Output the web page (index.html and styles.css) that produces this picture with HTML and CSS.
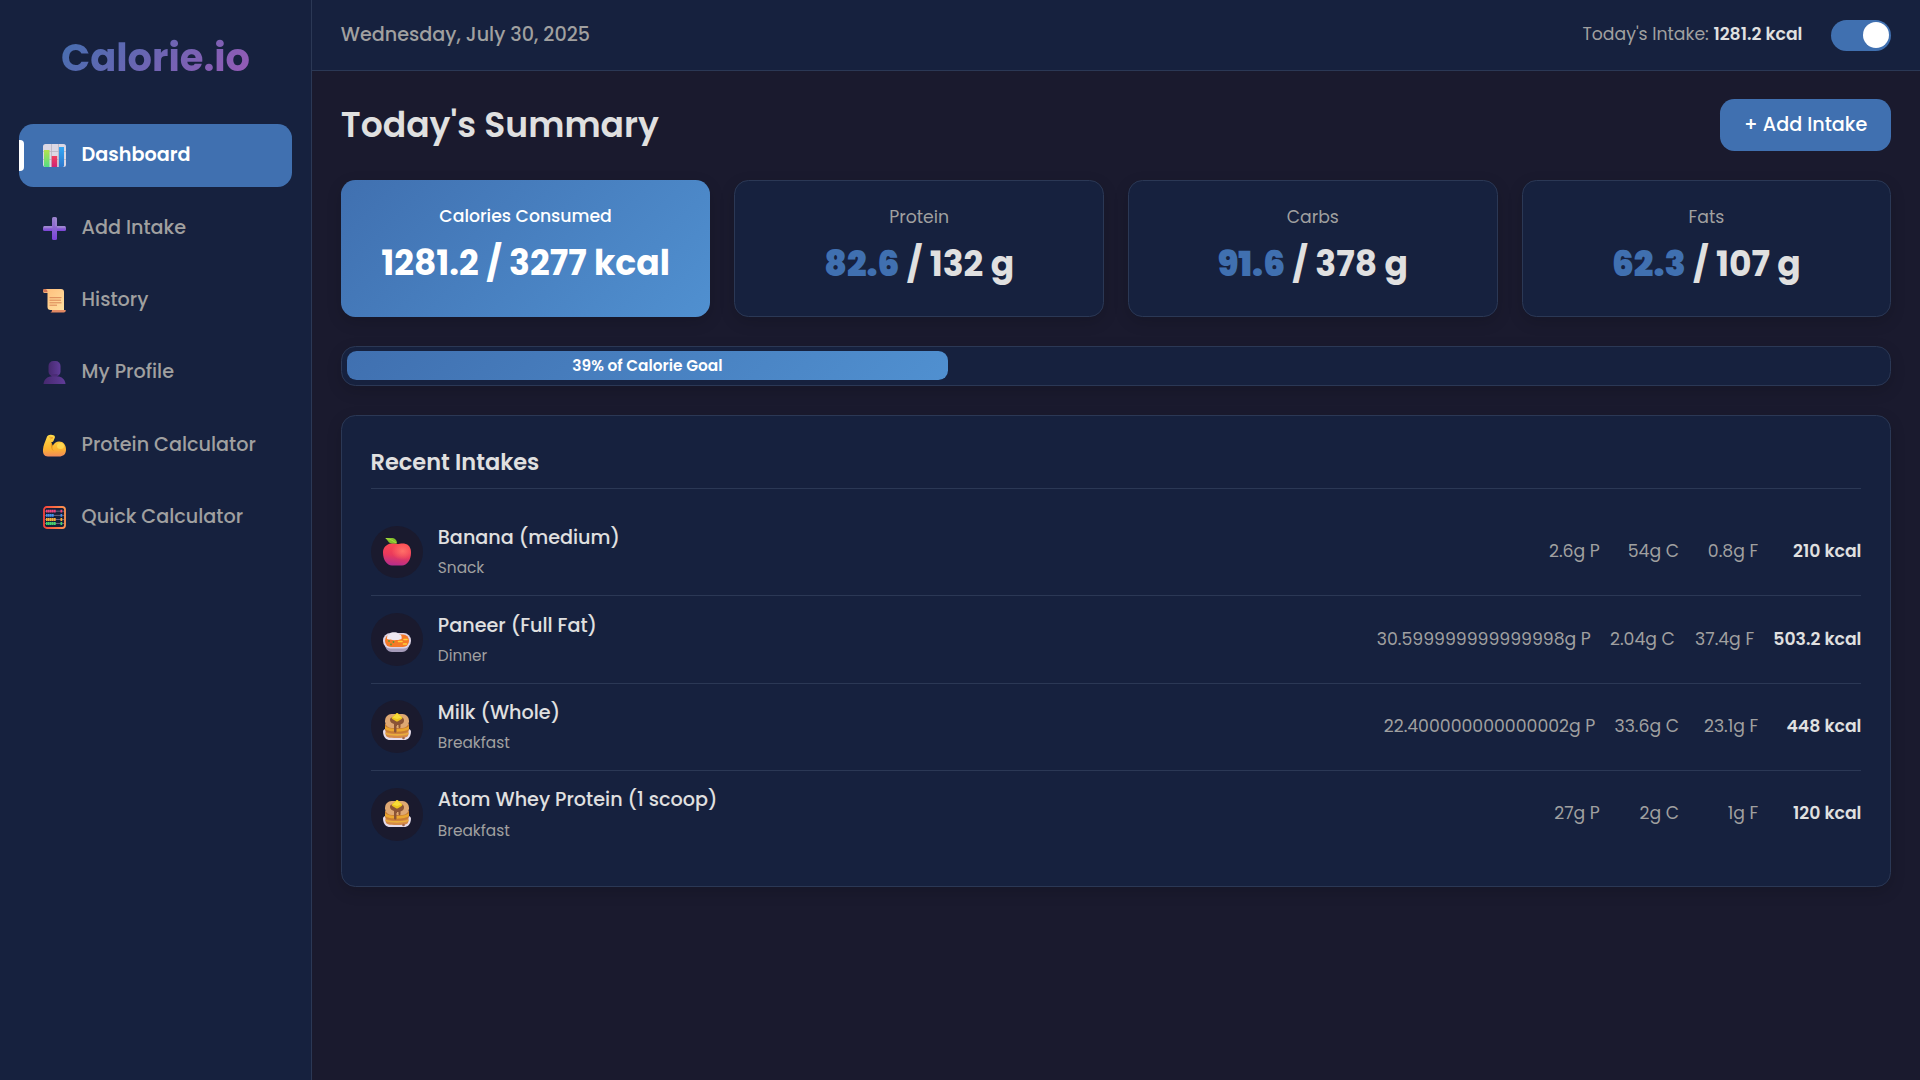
FILE: index.html
```html
<!DOCTYPE html>
<html lang="en">
<head>
<meta charset="utf-8">
<title>Calorie.io</title>
<link rel="stylesheet" href="styles.css">
</head>
<body>
<svg class="defs" aria-hidden="true">
  <defs>
    <linearGradient id="apple" x1="0.6" y1="0" x2="0.4" y2="1"><stop offset="0" stop-color="#ff4a50"/><stop offset="0.55" stop-color="#e93a5c"/><stop offset="1" stop-color="#b52d8c"/></linearGradient>
    <radialGradient id="shine" cx="0.7" cy="0.35" r="0.4"><stop offset="0" stop-color="#ff7068"/><stop offset="1" stop-color="#ff7068" stop-opacity="0"/></radialGradient>
    <linearGradient id="gold" x1="0" y1="0" x2="0" y2="1"><stop offset="0" stop-color="#ffdc4a"/><stop offset="0.65" stop-color="#fdb42f"/><stop offset="1" stop-color="#f08a5a"/></linearGradient>
    <linearGradient id="plus" x1="0" y1="0" x2="0" y2="1"><stop offset="0" stop-color="#9a83cc"/><stop offset="1" stop-color="#7b42d8"/></linearGradient>
    <linearGradient id="paper" x1="0" y1="0" x2="1" y2="1"><stop offset="0" stop-color="#ffbd7a"/><stop offset="1" stop-color="#ffe0a0"/></linearGradient>
    <linearGradient id="person" x1="0" y1="0" x2="1" y2="0"><stop offset="0" stop-color="#46296f"/><stop offset="1" stop-color="#603c98"/></linearGradient>
    <linearGradient id="frame" x1="0" y1="0" x2="1" y2="0"><stop offset="0" stop-color="#f5433a"/><stop offset="1" stop-color="#ff9550"/></linearGradient>
    <linearGradient id="green" x1="0" y1="0" x2="0" y2="1"><stop offset="0" stop-color="#b4e34c"/><stop offset="1" stop-color="#55dd84"/></linearGradient>
    <linearGradient id="blue" x1="0" y1="0" x2="0" y2="1"><stop offset="0" stop-color="#35a8f5"/><stop offset="1" stop-color="#2f78cc"/></linearGradient>
    <linearGradient id="red" x1="0" y1="0" x2="0" y2="1"><stop offset="0" stop-color="#f23f5c"/><stop offset="1" stop-color="#cf2377"/></linearGradient>
    <symbol id="pancakes" viewBox="0 0 28 28">
      <path d="M0 18.5C0 16 3 15 14 15s14 1 14 3.500c0 6-3.500 8.500-7 8.500H7c-3.500 0-7-2.500-7-8.500z" fill="#e6dce9"/>
      <path d="M2.500 15h23v5.500c0 4-3 4.500-11.500 4.500S2.500 24.500 2.500 20.500z" fill="#d58a48"/>
      <path d="M2.500 19.500c4 2 19 2 23 0v1.500c-4 2.300-19 2.300-23 0z" fill="#eaae3c"/>
      <path d="M2 11h24v5c0 3-4 4.500-12 4.500S2 19 2 16z" fill="#c77c32"/>
      <path d="M2 13c3 4 21 4 24 0v3c-4 3.500-20 3.500-24 0z" fill="#eaa62f"/>
      <rect x="2" y="1" width="24" height="14" rx="6.500" fill="#dea873"/>
      <path d="M7 7c0-3 3-3 7-3s7 0 7 3.500c0 2-1 3-3.500 4V14c0 1.500-2 1.500-2 0v-2H14v1h-.5v5.500c0 1.500-2.500 1.500-2.500 0V11C8.500 10 7 9 7 7z" fill="#8b5436"/>
      <path d="M9 4.300 13 .5c.7-.6 1.500-.6 2.200 0L19 4.300c.5.500.4 1.200-.3 1.600l-3.700 2.300c-.6.400-1.400.400-2 0L9.300 6c-.7-.4-.8-1.100-.3-1.700z" fill="#edc51c"/>
      <path d="m9.500 4.500 4.600-3.900 4.500 3.900-4.500 1.600z" fill="#f8dc3a"/>
      <circle cx="20.500" cy="25" r="1.300" fill="#a36649"/>
    </symbol>
  </defs>
</svg>
<div class="app">
  <aside class="sidebar">
    <div class="logo">Calorie.io</div>
    <nav class="nav">
      <a class="nav-item active">
        <svg class="nav-icon" viewBox="0 0 23 23"><rect width="23" height="23" rx="2.500" fill="#dcd8e4"/><path d="M8.500 0v23M15.500 0v23M0 7.500h23M0 15.500h23" stroke="#b9b4c2" stroke-width=".8"/><path d="M1 6h5.500v17H2.500A1.500 1.500 0 0 1 1 21.500z" fill="url(#green)"/><path d="M8.700 12h5.500v11H8.700z" fill="url(#red)"/><path d="M16 3h5v18.500a1.500 1.500 0 0 1-1.500 1.500H16z" fill="url(#blue)"/></svg>
        <span>Dashboard</span></a>
      <a class="nav-item">
        <svg class="nav-icon" viewBox="0 0 23 23"><rect y="9" width="23" height="5" rx="1.500" fill="url(#plus)"/><rect x="9" width="5" height="23" rx="1.500" fill="url(#plus)"/><path d="M13 1v8.500M1 10h8.500M14 10h8" stroke="#a590d2" stroke-width="1"/></svg>
        <span>Add Intake</span></a>
      <a class="nav-item">
        <svg class="nav-icon" viewBox="0 0 23 23"><path d="M1.500 0H18c2 0 3 1 3 3v18H7.500c-2 0-3-1-3-3V4H1.500C-.5 4-.5 0 1.500 0z" fill="url(#paper)"/><path d="M1.500 0C4 0 4.500 1.500 4.500 3.200H1.500C-.4 3.200-.4 0 1.500 0z" fill="#cf7457"/><path d="M6.500 8.700h12M6.500 11.200h11.500M6.500 13.800h12M6.500 16.200h7.500" stroke="#d98656" stroke-width="1"/><path d="M9 21h13.700c.3 1.300-.5 2.500-2 2.500H7c1.500 0 2-1 2-2.500z" fill="#e38a63"/></svg>
        <span>History</span></a>
      <a class="nav-item">
        <svg class="nav-icon" viewBox="0 0 23 23"><rect x="5.500" width="12" height="15.500" rx="5" fill="url(#person)"/><path d="M8.500 13h6v4h-6z" fill="#4b2c76"/><path d="M.5 23c.5-5 4-7.500 8-7.500h6c4 0 7.500 2.500 8 7.500z" fill="url(#person)"/></svg>
        <span>My Profile</span></a>
      <a class="nav-item">
        <svg class="nav-icon" viewBox="0 0 23 23"><path d="M3.500 4C4 1.500 6 .5 8 .7l2.500.5c1.700.4 1.700 2.200 1 3.300L10.500 7c-.4 1-1.500 1-2.300 1l1.500 4c1-2.500 3.500-4.500 6.500-4.500 4 0 6.800 3.500 6.800 8 0 5-3 7-7 7H5c-4 0-5.300-3-5-7C.3 11.500 2 8 3.500 4z" fill="url(#gold)"/><path d="M8.200 8 9.700 12c-.7 2 0 4 1.300 5-2.500-1-3.800-4-2.800-9z" fill="#e8961f"/><ellipse cx="17.500" cy="12" rx="3.500" ry="3" fill="#ffe15b" opacity=".7"/><path d="m6 3 4 .7-3 1.500" fill="none" stroke="#f2a72e"/></svg>
        <span>Protein Calculator</span></a>
      <a class="nav-item">
        <svg class="nav-icon" viewBox="0 0 23 23"><rect x="1" y="1" width="21" height="21" rx="2.700" fill="#14203a" stroke="url(#frame)" stroke-width="1.800"/><path d="M2 5.200h19M2 9.400h19M2 13.500h19M2 17.500h19" stroke="#8b7e9a" stroke-width=".7"/><g stroke-width="2.800" stroke-dasharray="1.700 .3"><path d="M3 5.200h10M17.500 5.200h2" stroke="#f0447d"/><path d="M3 9.400h8M17.500 9.400h2" stroke="#4292ed"/><path d="M3 13.500h10M17.500 13.500h2" stroke="#f9ae38"/><path d="M3 17.500h10M17.500 17.500h2" stroke="#43d36b"/></g></svg>
        <span>Quick Calculator</span></a>
    </nav>
  </aside>
  <div class="page">
    <header class="topbar">
      <div class="date">Wednesday, July 30, 2025</div>
      <div class="topbar-right">
        <div class="today">Today's Intake: <strong>1281.2 kcal</strong></div>
        <div class="switch"><div class="knob"></div></div>
      </div>
    </header>
    <main class="main">
      <div class="title-row"><h1>Today's Summary</h1><button class="add">+ Add Intake</button></div>
      <section class="stats">
        <div class="stat primary"><div class="label">Calories Consumed</div><div class="value">1281.2 / 3277 kcal</div></div>
        <div class="stat"><div class="label">Protein</div><div class="value"><b>82.6</b> / 132 g</div></div>
        <div class="stat"><div class="label">Carbs</div><div class="value"><b>91.6</b> / 378 g</div></div>
        <div class="stat"><div class="label">Fats</div><div class="value"><b>62.3</b> / 107 g</div></div>
      </section>
      <div class="progress"><div class="fill" style="width:39.1%">39% of Calorie Goal</div></div>
      <section class="recent">
        <h2>Recent Intakes</h2>
        <ul class="list">
          <li class="row">
            <div class="avatar"><svg class="food" viewBox="0 0 28 28"><path d="M8.500 5.500C11.500 5 13 5.500 14 6S18 5 21 5.500c5 .8 7 4.500 7 9 0 7.500-4 13-9 13h-10C4 27.500 0 22 0 14.500c0-4.500 3-8.500 8.500-9z" fill="url(#apple)"/><path d="M8.500 5.500C11.500 5 13 5.500 14 6S18 5 21 5.500c5 .8 7 4.500 7 9 0 7.500-4 13-9 13h-10C4 27.500 0 22 0 14.500c0-4.500 3-8.500 8.500-9z" fill="url(#shine)"/><path d="M2 0h6c4 0 6 2 6 5.500H9C5 5.500 5 1.500 2 0z" fill="#83bf2c"/><path d="M3 .5C8 1 10 3 13 5" stroke="#a6dc42" fill="none"/></svg></div>
            <div class="info"><div class="name">Banana (medium)</div><div class="meal">Snack</div></div>
            <div class="nums"><span class="m">2.6g P</span><span class="m">54g C</span><span class="m">0.8g F</span><strong>210 kcal</strong></div>
          </li>
          <li class="row">
            <div class="avatar"><svg class="food" viewBox="0 0 28 28"><path d="M1 16c1 7 3 11 8 11h10c5 0 7-4 8-11z" fill="#a59bb9"/><rect y="8" width="28" height="15.500" rx="7.500" fill="#ddd3e4"/><rect x="2" y="9.500" width="24" height="12.500" rx="6" fill="#f57a28"/><path d="M4 13c0-2.500 1-3.500 2.500-3.600C7 7.500 9 6.800 11 7.300c3-.6 4 .7 5 2 2.500.5 3 2 2.500 4.700-4 1.600-10 1.600-14.500 0z" fill="#eee8f1"/><path d="M15.500 16.500h3.500M21 14.500h3M20.500 19h3" stroke="#ffd339" stroke-width="1.600" stroke-linecap="round"/><g fill="#579a36"><circle cx="6" cy="16" r=".9"/><circle cx="10.500" cy="17" r=".9"/><circle cx="8" cy="19.500" r=".9"/></g></svg></div>
            <div class="info"><div class="name">Paneer (Full Fat)</div><div class="meal">Dinner</div></div>
            <div class="nums"><span class="m">30.599999999999998g P</span><span class="m">2.04g C</span><span class="m">37.4g F</span><strong>503.2 kcal</strong></div>
          </li>
          <li class="row">
            <div class="avatar"><svg class="food"><use href="#pancakes"/></svg></div>
            <div class="info"><div class="name">Milk (Whole)</div><div class="meal">Breakfast</div></div>
            <div class="nums"><span class="m">22.400000000000002g P</span><span class="m">33.6g C</span><span class="m">23.1g F</span><strong>448 kcal</strong></div>
          </li>
          <li class="row">
            <div class="avatar"><svg class="food"><use href="#pancakes"/></svg></div>
            <div class="info"><div class="name">Atom Whey Protein (1 scoop)</div><div class="meal">Breakfast</div></div>
            <div class="nums"><span class="m">27g P</span><span class="m">2g C</span><span class="m">1g F</span><strong>120 kcal</strong></div>
          </li>
        </ul>
      </section>
    </main>
  </div>
</div>
</body>
</html>
```
FILE: styles.css
```css
:root {
  --bg: #1a1a2e;
  --panel: #16213e;
  --line: #2b3855;
  --primary: #4070b0;
  --primary-light: #5090d0;
  --text: #e0e0e0;
  --muted: #a0a0a0;
}

* { box-sizing: border-box; }

body {
  margin: 0;
  background: var(--bg);
  color: var(--text);
  font-family: Poppins, Inter, sans-serif;
  font-size: 19.2px;
  line-height: 1.6;
}

.defs { display: block; width: 0; height: 0; }

.app { display: flex; height: 100vh; overflow: hidden; }

/* Sidebar */
.sidebar {
  flex: 0 0 312px;
  padding: 26.8px 19.2px;
  background: var(--panel);
  border-right: 1px solid var(--line);
}
.logo {
  width: fit-content;
  margin: 0 auto 36px;
  font-size: 38.4px;
  font-weight: 700;
  background: linear-gradient(135deg, var(--primary), #9b59b6);
  -webkit-background-clip: text;
  background-clip: text;
  color: transparent;
}
.nav { display: flex; flex-direction: column; gap: 9.6px; }
.nav-item {
  position: relative;
  display: flex;
  align-items: center;
  gap: 15.4px;
  height: 62.8px;
  padding: 0 24px;
  border-radius: 14.4px;
  color: var(--muted);
  font-weight: 500;
}
.nav-item.active { background: var(--primary); color: #fff; font-weight: 600; }
.nav-item.active::before {
  content: "";
  position: absolute;
  left: 0;
  top: 16px;
  width: 5px;
  height: 31px;
  border-radius: 0 4px 4px 0;
  background: #fff;
}
.nav-icon { width: 23px; height: 23px; overflow: visible; }

/* Top bar */
.page { flex: 1; min-width: 0; }
.topbar {
  display: flex;
  align-items: center;
  justify-content: space-between;
  height: 71px;
  padding: 0 28.8px;
  background: var(--panel);
  border-bottom: 1px solid var(--line);
}
.date { color: var(--muted); font-weight: 500; }
.topbar-right { display: flex; align-items: center; gap: 28.8px; }
.today { color: var(--muted); font-size: 17.28px; }
.today strong { color: var(--text); font-weight: 600; }
.switch {
  display: flex;
  align-items: center;
  justify-content: flex-end;
  width: 60px;
  height: 31px;
  padding-right: 2px;
  border-radius: 16px;
  background: var(--primary);
}
.knob { width: 26px; height: 26px; border-radius: 50%; background: #fff; }

/* Content */
.main {
  display: flex;
  flex-direction: column;
  gap: 28.8px;
  padding: 28.2px 28.8px 28.8px;
}
.title-row { display: flex; align-items: center; justify-content: space-between; height: 52px; }
h1 { margin: 0; font-size: 34.56px; font-weight: 600; }
.add {
  width: 171px;
  height: 52px;
  padding: 0;
  border: 0;
  border-radius: 14.4px;
  background: var(--primary);
  color: #fff;
  font: inherit;
  font-weight: 500;
}

.stats { display: grid; grid-template-columns: repeat(4, 1fr); gap: 24px; }
.stat {
  height: 137.2px;
  padding: 23.4px 24px;
  border: 1px solid var(--line);
  border-radius: 14.4px;
  background: var(--panel);
  box-shadow: 0 5px 15px rgba(0, 0, 0, 0.15);
  text-align: center;
}
.stat.primary {
  border: 0;
  background: linear-gradient(135deg, var(--primary), var(--primary-light));
  color: #fff;
}
.label { margin-bottom: 4.8px; color: var(--muted); font-size: 17.28px; }
.primary .label { color: #fff; font-weight: 500; }
.value { font-size: 34.56px; font-weight: 700; }
.value b { color: var(--primary); }

.progress {
  height: 40px;
  padding: 4px 4.8px 5px;
  border: 1px solid var(--line);
  border-radius: 14.4px;
  background: var(--panel);
  box-shadow: 0 5px 15px rgba(0, 0, 0, 0.15);
}
.fill {
  height: 100%;
  border-radius: 9.6px;
  background: linear-gradient(135deg, var(--primary), var(--primary-light));
  color: #fff;
  font-size: 15.36px;
  font-weight: 600;
  line-height: 29px;
  text-align: center;
}

.recent {
  padding: 28.8px;
  border: 1px solid var(--line);
  border-radius: 14.4px;
  background: var(--panel);
  box-shadow: 0 5px 15px rgba(0, 0, 0, 0.15);
}
h2 {
  margin: 0 0 19.2px;
  padding-bottom: 8px;
  border-bottom: 1px solid var(--line);
  font-size: 22.46px;
  font-weight: 600;
}
.list { margin: 0; padding: 0; list-style: none; }
.row {
  display: flex;
  align-items: center;
  gap: 14.4px;
  padding: 14.4px 0;
  border-bottom: 1px solid var(--line);
}
.row:last-child { border-bottom: 0; }
.avatar {
  display: flex;
  align-items: center;
  justify-content: center;
  width: 52.8px;
  height: 52.8px;
  border-radius: 50%;
  background: var(--bg);
}
.food { width: 28px; height: 28px; }
.info { flex: 1; }
.name { font-weight: 500; }
.meal { margin-top: 2.4px; color: var(--muted); font-size: 15.36px; }
.nums { display: flex; gap: 19.2px; color: var(--muted); font-size: 17.28px; text-align: right; }
.m { min-width: 60px; }
.nums strong { min-width: 84px; color: var(--text); font-weight: 600; }
```
